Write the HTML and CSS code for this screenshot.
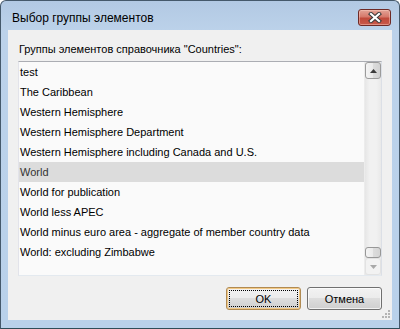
FILE: index.html
```html
<!DOCTYPE html>
<html lang="ru">
<head>
<meta charset="utf-8">
<title>Выбор группы элементов</title>
<link rel="stylesheet" href="styles.css">
</head>
<body>
<div class="window">
  <div class="titlebar">
    <span class="title">Выбор группы элементов</span>
    <div class="close">
      <svg width="14" height="11" viewBox="0 0 14 11">
        <path d="M3 2 L11 9 M11 2 L3 9" stroke="#3a3a3a" stroke-width="4.2" stroke-linecap="square" fill="none"/>
        <path d="M3 2 L11 9 M11 2 L3 9" stroke="#ffffff" stroke-width="2.2" stroke-linecap="square" fill="none"/>
      </svg>
    </div>
  </div>
  <div class="client">
    <div class="label">Группы элементов справочника "Countries":</div>
    <div class="listbox">
      <ul class="items">
        <li>test</li>
        <li>The Caribbean</li>
        <li>Western Hemisphere</li>
        <li>Western Hemisphere Department</li>
        <li>Western Hemisphere including Canada and U.S.</li>
        <li class="selected">World</li>
        <li>World for publication</li>
        <li>World less APEC</li>
        <li>World minus euro area - aggregate of member country data</li>
        <li>World: excluding Zimbabwe</li>
      </ul>
      <div class="scrollbar">
        <div class="sb-btn up">
          <svg width="7" height="4" viewBox="0 0 7 4"><path d="M0 4 L3.5 0 L7 4 Z" fill="#3c3c3c"/></svg>
        </div>
        <div class="track"><div class="thumb"></div></div>
        <div class="sb-btn down">
          <svg width="7" height="4" viewBox="0 0 7 4"><path d="M0 0 L7 0 L3.5 4 Z" fill="#a8a8a8"/></svg>
        </div>
      </div>
    </div>
    <div class="buttons">
      <button class="btn default"><span class="focus">OK</span></button>
      <button class="btn">Отмена</button>
    </div>
    <div class="grip">
      <svg width="8" height="8" viewBox="0 0 8 8">
        <g fill="#b4b4b4">
          <rect x="6" y="0" width="2" height="2"/>
          <rect x="3" y="3" width="2" height="2"/><rect x="6" y="3" width="2" height="2"/>
          <rect x="0" y="6" width="2" height="2"/><rect x="3" y="6" width="2" height="2"/><rect x="6" y="6" width="2" height="2"/>
        </g>
      </svg>
    </div>
  </div>
</div>
</body>
</html>
```
FILE: styles.css
```css
* { box-sizing: border-box; }
html, body { margin: 0; padding: 0; background: #ffffff; }
body {
  width: 400px;
  height: 329px;
  font-family: "Liberation Sans", Arial, sans-serif;
  font-size: 11px;
  color: #000;
}
.window {
  width: 400px;
  height: 329px;
  border: 1px solid #45596b;
  border-bottom-color: #2f4d58;
  border-radius: 6px 6px 0 0;
  background: linear-gradient(to bottom, #b2c9e3 0px, #bcd2ea 30px, #b9d1ea 100%);
  padding: 0 7px 8px 7px;
  display: flex;
  flex-direction: column;
}
.titlebar {
  height: 29px;
  flex: none;
  display: flex;
  justify-content: space-between;
  align-items: flex-start;
  padding-left: 4px;
}
.title {
  font-size: 12px;
  line-height: 15px;
  margin-top: 10px;
  color: #000;
}
.close {
  width: 33px;
  height: 17px;
  margin-top: 8px;
  margin-right: 1px;
  border: 1px solid #6e2a26;
  border-radius: 3px;
  background: linear-gradient(to bottom, #e3a396 0%, #d6796b 45%, #c04a3b 55%, #c8594a 100%);
  box-shadow: inset 0 0 0 1px rgba(255, 210, 200, 0.45);
  display: flex;
  align-items: center;
  justify-content: center;
}
.close svg { display: block; }
.client {
  flex: 1;
  background: #f0f0f0;
  padding: 0 10px;
  display: flex;
  flex-direction: column;
  position: relative;
}
.label {
  margin-top: 12px;
  margin-left: 1px;
  height: 15px;
  line-height: 15px;
  color: #000;
}
.listbox {
  margin-top: 4px;
  height: 215px;
  border: 1px solid #a0a0a0;
  border-color: #abadb3 #dbdfe6 #e3e9ef #e2e3ea;
  background: #fafafa;
  display: flex;
}
.items {
  list-style: none;
  margin: 0;
  padding: 0;
  flex: 1;
}
.items li {
  height: 20px;
  line-height: 20px;
  padding-left: 1px;
  white-space: nowrap;
  overflow: hidden;
}
.items li.selected {
  background: #dcdcdc;
  color: #333;
}
.scrollbar {
  width: 17px;
  flex: none;
  display: flex;
  flex-direction: column;
  background: linear-gradient(to right, #e6e6e6, #f1f1f1 30%, #f1f1f1 70%, #e9e9e9);
  border-left: 1px solid #ececec;
}
.sb-btn {
  height: 17px;
  flex: none;
  display: flex;
  align-items: center;
  justify-content: center;
}
.sb-btn svg { display: block; }
.sb-btn.up {
  border: 1px solid #9b9b9b;
  border-radius: 3px;
  background: linear-gradient(to right, #f4f4f4, #eaeaea 50%, #dcdcdc 51%, #d2d2d2);
}
.sb-btn.down {
  border: 1px solid #e2e2e2;
  border-radius: 3px;
  background: #f2f2f2;
}
.track {
  flex: 1;
  display: flex;
  flex-direction: column;
  justify-content: flex-end;
}
.thumb {
  height: 11px;
  border: 1px solid #979797;
  border-radius: 3px;
  background: linear-gradient(to right, #f4f4f4, #eaeaea 50%, #dcdcdc 51%, #d4d4d4);
}
.buttons {
  margin-top: 11px;
  display: flex;
  justify-content: flex-end;
  gap: 6px;
}
.btn {
  width: 75px;
  height: 23px;
  margin: 0;
  padding: 0;
  font-family: inherit;
  font-size: 11px;
  color: #000;
  border: 1px solid #707070;
  border-radius: 3px;
  background: linear-gradient(to bottom, #f2f2f2 0%, #ebebeb 49%, #dddddd 50%, #cfcfcf 100%);
  box-shadow: inset 0 0 0 1px rgba(255, 255, 255, 0.7);
  display: flex;
  align-items: center;
  justify-content: center;
}
.btn.default {
  border-color: #b08a52;
  box-shadow: inset 0 0 0 1px #f3c985;
  padding: 2px;
}
.btn .focus {
  width: 100%;
  height: 100%;
  border: 1px dotted #000;
  display: flex;
  align-items: center;
  justify-content: center;
}
.grip {
  position: absolute;
  right: 2px;
  bottom: 2px;
}
.grip svg { display: block; }
```
